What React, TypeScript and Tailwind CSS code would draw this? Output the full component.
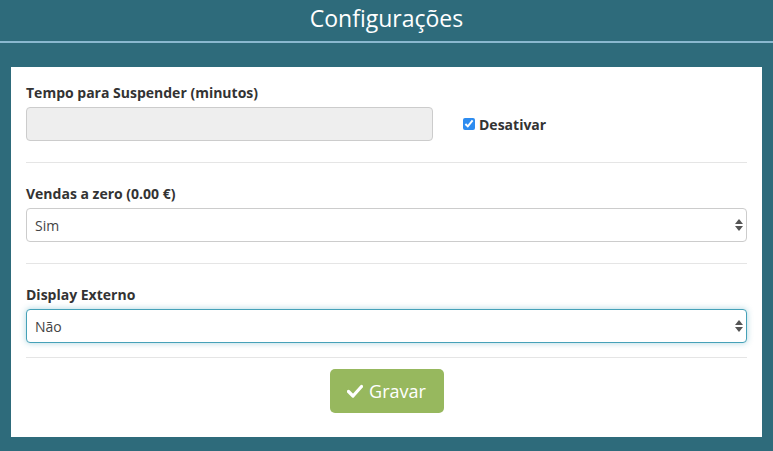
import { useState } from "react";

export default function App() {
  const [disabled, setDisabled] = useState(true);
  const [zero, setZero] = useState("Sim");
  const [display, setDisplay] = useState("Não");

  return (
    <div className="min-h-[451px] bg-[#2e6b7b] font-['Open_Sans',sans-serif] text-[#333]">
      <div className="h-[43px] flex items-center justify-center border-b-2 border-[#8ab8cf]">
        <h1 className="text-[23px] font-normal text-white leading-none -mt-[4px]">Configurações</h1>
      </div>

      <div className="px-[11px] pt-[24px] pb-[12px]">
        <div className="bg-white px-[15px] pt-[16px] pb-[24px]">
          <div className="flex items-end gap-[30px]">
            <div className="w-[407px]">
              <Label>Tempo para Suspender (minutos)</Label>
              <input
                disabled
                className="block w-full h-[34px] rounded-[4px] border border-[#ccc] bg-[#eee] px-3"
              />
            </div>
            <label className="flex items-center gap-[4px] h-[34px] text-[14px] font-bold">
              <input
                type="checkbox"
                checked={disabled}
                onChange={(e) => setDisabled(e.target.checked)}
                className="w-[12px] h-[12px] accent-[#2d8cf0]"
              />
              Desativar
            </label>
          </div>

          <Divider />

          <Label>Vendas a zero (0.00 €)</Label>
          <Select value={zero} onChange={setZero} options={["Sim", "Não"]} />

          <Divider />

          <Label>Display Externo</Label>
          <Select value={display} onChange={setDisplay} options={["Sim", "Não"]} focused />

          <div className="mt-[14px] border-t border-[#e5e5e5] pt-[11px] flex justify-center">
            <button className="h-[44px] w-[114px] rounded-[5px] bg-[#97b85e] text-white text-[18px] flex items-center justify-center gap-[6px]">
              <svg width="16" height="14" viewBox="0 0 16 14">
                <path d="M1.5 7.5 L6 12 L14.5 2.5" fill="none" stroke="white" strokeWidth="3.2" strokeLinecap="round" strokeLinejoin="round" />
              </svg>
              Gravar
            </button>
          </div>
        </div>
      </div>
    </div>
  );
}

function Label({ children }: { children: React.ReactNode }) {
  return <div className="text-[14px] font-bold leading-[20px] mb-[4px]">{children}</div>;
}

function Divider() {
  return <div className="border-t border-[#e5e5e5] mt-[21px] mb-[21px]" />;
}

function Select({
  value,
  onChange,
  options,
  focused,
}: {
  value: string;
  onChange: (v: string) => void;
  options: string[];
  focused?: boolean;
}) {
  return (
    <div className="relative">
      <select
        value={value}
        onChange={(e) => onChange(e.target.value)}
        className={
          focused
            ? "block w-full h-[34px] appearance-none rounded-[4px] border border-[#45a1b8] bg-white pl-[8px] text-[14px] text-[#444] shadow-[0_0_6px_rgba(69,161,184,0.45)] outline-none"
            : "block w-full h-[34px] appearance-none rounded-[4px] border border-[#ccc] bg-white pl-[8px] text-[14px] text-[#444] outline-none"
        }
      >
        {options.map((o) => (
          <option key={o}>{o}</option>
        ))}
      </select>
      <svg className="absolute right-[4px] top-[11px] pointer-events-none" width="8" height="12" viewBox="0 0 8 12">
        <path d="M4 0 L8 5 L0 5 Z" fill="#555" />
        <path d="M0 7 L8 7 L4 12 Z" fill="#555" />
      </svg>
    </div>
  );
}
